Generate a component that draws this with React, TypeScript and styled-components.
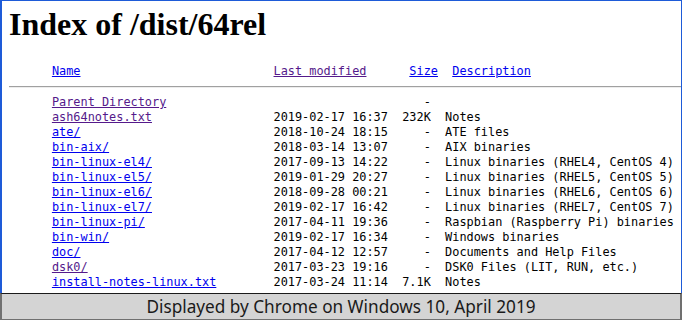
import React from 'react'
import styled, { createGlobalStyle } from 'styled-components'

type Entry = {
  name: string
  href: string
  date: string
  size: string
  desc: string
  visited?: boolean
}

const entries: Entry[] = [
  { name: 'Parent Directory', href: '/dist/', date: '', size: '-', desc: '', visited: true },
  { name: 'ash64notes.txt', href: 'ash64notes.txt', date: '2019-02-17 16:37', size: '232K', desc: 'Notes', visited: true },
  { name: 'ate/', href: 'ate/', date: '2018-10-24 18:15', size: '-', desc: 'ATE files' },
  { name: 'bin-aix/', href: 'bin-aix/', date: '2018-03-14 13:07', size: '-', desc: 'AIX binaries' },
  { name: 'bin-linux-el4/', href: 'bin-linux-el4/', date: '2017-09-13 14:22', size: '-', desc: 'Linux binaries (RHEL4, CentOS 4)' },
  { name: 'bin-linux-el5/', href: 'bin-linux-el5/', date: '2019-01-29 20:27', size: '-', desc: 'Linux binaries (RHEL5, CentOS 5)' },
  { name: 'bin-linux-el6/', href: 'bin-linux-el6/', date: '2018-09-28 00:21', size: '-', desc: 'Linux binaries (RHEL6, CentOS 6)' },
  { name: 'bin-linux-el7/', href: 'bin-linux-el7/', date: '2019-02-17 16:42', size: '-', desc: 'Linux binaries (RHEL7, CentOS 7)' },
  { name: 'bin-linux-pi/', href: 'bin-linux-pi/', date: '2017-04-11 19:36', size: '-', desc: 'Raspbian (Raspberry Pi) binaries' },
  { name: 'bin-win/', href: 'bin-win/', date: '2019-02-17 16:34', size: '-', desc: 'Windows binaries' },
  { name: 'doc/', href: 'doc/', date: '2017-04-12 12:57', size: '-', desc: 'Documents and Help Files' },
  { name: 'dsk0/', href: 'dsk0/', date: '2017-03-23 19:16', size: '-', desc: 'DSK0 Files (LIT, RUN, etc.)', visited: true },
  { name: 'install-notes-linux.txt', href: 'install-notes-linux.txt', date: '2017-03-24 11:14', size: '7.1K', desc: 'Notes' }
]

const GlobalStyle = createGlobalStyle`
  html, body {
    margin: 0;
    padding: 0;
    background: #ffffff;
  }
`

const Frame = styled.div`
  width: 682px;
  height: 320px;
  box-sizing: border-box;
  display: flex;
  flex-direction: column;
  overflow: hidden;
`

const Page = styled.div`
  flex: 1;
  min-height: 0;
  box-sizing: border-box;
  border: 1px solid #1e5bd8;
  border-left-width: 2px;
  border-bottom: none;
  padding: 0 0 0 7px;
  background: #ffffff;
  overflow: hidden;
`

const Title = styled.h1`
  margin: 5px 0 0;
  font-family: 'Liberation Serif', 'Times New Roman', serif;
  font-size: 32px;
  font-weight: bold;
  line-height: 36px;
  color: #000000;
`

const Listing = styled.div`
  margin-top: 22px;
  font-family: 'DejaVu Sans Mono', 'Liberation Mono', monospace;
  font-size: 11.88px;
  line-height: 15px;
  color: #000000;
  white-space: pre;
`

const Row = styled.div<{ $header?: boolean }>`
  display: grid;
  grid-template-columns: 31ch ${(p) => (p.$header ? '19ch' : '18ch')} 4ch auto;
  padding-left: 6ch;
  height: 15px;
`

const Size = styled.span<{ $header?: boolean }>`
  text-align: ${(p) => (p.$header ? 'left' : 'right')};
`

const Desc = styled.span`
  padding-left: 2ch;
`

const Link = styled.a<{ $visited?: boolean }>`
  color: ${(p) => (p.$visited ? '#551a8b' : '#0000ee')};
  text-decoration: underline;
`

const Rule = styled.hr`
  margin: 7px 0;
  height: 0;
  border: none;
  border-top: 1px solid #a0a0a0;
  border-bottom: 1px solid #ededed;
`

const Caption = styled.div`
  height: 27px;
  flex: none;
  box-sizing: border-box;
  border-top: 1px solid #1a1a1a;
  border-left: 2px solid #707070;
  border-right: 2px solid #707070;
  border-bottom: 1px solid #707070;
  background: #d4d4d4;
  display: flex;
  align-items: center;
  justify-content: center;
  font-family: 'Noto Sans', 'Open Sans', sans-serif;
  font-size: 17.2px;
  color: #1a1a1a;
`

export default function App() {
  return (
    <>
      <GlobalStyle />
      <Frame>
        <Page>
          <Title>Index of /dist/64rel</Title>
          <Listing>
            <Row $header>
              <span>
                <Link href="?C=N;O=D">Name</Link>
              </span>
              <span>
                <Link href="?C=M;O=A" $visited>
                  Last modified
                </Link>
              </span>
              <Size $header>
                <Link href="?C=S;O=A">Size</Link>
              </Size>
              <Desc>
                <Link href="?C=D;O=A">Description</Link>
              </Desc>
            </Row>
            <Rule />
            {entries.map((e) => (
              <Row key={e.name}>
                <span>
                  <Link href={e.href} $visited={e.visited}>
                    {e.name}
                  </Link>
                </span>
                <span>{e.date}</span>
                <Size>{e.size}</Size>
                <Desc>{e.desc}</Desc>
              </Row>
            ))}
          </Listing>
        </Page>
        <Caption>Displayed by Chrome on Windows 10, April 2019</Caption>
      </Frame>
    </>
  )
}
